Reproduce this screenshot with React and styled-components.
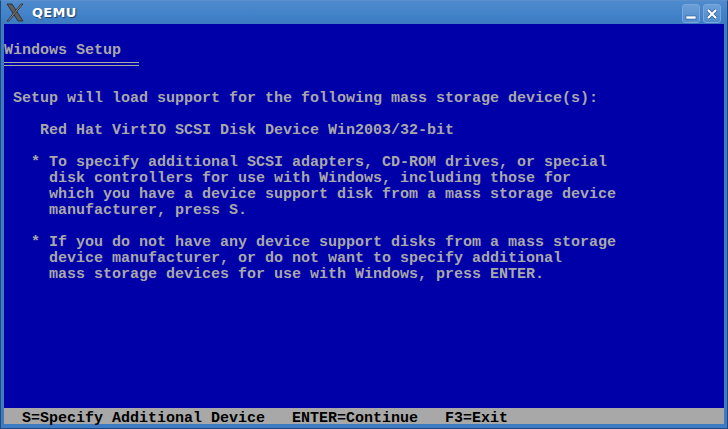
import React from "react";
import styled, { createGlobalStyle } from "styled-components";

const GlobalStyle = createGlobalStyle`
  html, body {
    margin: 0;
    padding: 0;
    background: #1c3f6e;
  }
`;

const Window = styled.div`
  width: 728px;
  height: 429px;
  display: flex;
  flex-direction: column;
  background: #3d7bc3;
  box-sizing: border-box;
  border: 1px solid #23497c;
  border-top-color: #5b8fcc;
`;

const TitleBar = styled.div`
  height: 23px;
  display: flex;
  align-items: center;
  padding: 0 6px 0 5px;
  background: linear-gradient(#4f8bcd, #4282c8 60%, #3c7bc2);
  font-family: "DejaVu Sans", "Liberation Sans", sans-serif;
`;

const Title = styled.span`
  margin-left: 8px;
  color: #fff;
  font-weight: bold;
  font-size: 13px;
  letter-spacing: 0.3px;
  text-shadow: 1px 1px 1px #1d3f70;
  flex: 1;
`;

const Buttons = styled.div`
  display: flex;
  gap: 3px;
  padding-top: 2px;
`;

const TitleButton = styled.div`
  width: 16px;
  height: 17px;
  border-radius: 3px;
  border: 1px solid #7aa6da;
  background: linear-gradient(#6b9fd8, #4f8bcd);
  display: flex;
  align-items: center;
  justify-content: center;
`;

const Frame = styled.div`
  flex: 1;
  display: flex;
  padding: 0 3px 4px 3px;
`;

const Screen = styled.div`
  width: 720px;
  height: 400px;
  background: #0000a8;
  display: flex;
  flex-direction: column;
  font-family: "Liberation Mono", "DejaVu Sans Mono", monospace;
  font-size: 15px;
  font-weight: bold;
  color: #a8a8a8;
`;

const Row = styled.div`
  height: 16px;
  line-height: 21px;
  white-space: pre;
  background: ${(p) => (p.$bar ? "#a8a8a8" : "transparent")};
  color: ${(p) => (p.$bar ? "#000" : "#a8a8a8")};
`;

const Spacer = styled.div`
  flex: 1;
`;

const RuleRow = styled.div`
  height: 16px;
`;

const Rule = styled.div`
  width: 135px;
  height: 4px;
  margin-top: 6px;
  border-top: 1px solid #a8a8a8;
  border-bottom: 1px solid #a8a8a8;
  box-sizing: border-box;
`;

const lines = [
  "",
  "Windows Setup",
  null,
  "",
  " Setup will load support for the following mass storage device(s):",
  "",
  "    Red Hat VirtIO SCSI Disk Device Win2003/32-bit",
  "",
  "   * To specify additional SCSI adapters, CD-ROM drives, or special",
  "     disk controllers for use with Windows, including those for",
  "     which you have a device support disk from a mass storage device",
  "     manufacturer, press S.",
  "",
  "   * If you do not have any device support disks from a mass storage",
  "     device manufacturer, or do not want to specify additional",
  "     mass storage devices for use with Windows, press ENTER.",
];

const XLogo = () => (
  <svg width="18" height="19" viewBox="0 0 18 19">
    <polygon points="1,1 6,1 17,18 12,18" fill="#5e5e5e" stroke="#262626" strokeWidth="0.8" />
    <polygon points="15,1 17,1 3,18 1,18" fill="#8c8c8c" stroke="#262626" strokeWidth="0.8" />
  </svg>
);

const App = () => (
  <>
    <GlobalStyle />
    <Window>
      <TitleBar>
        <XLogo />
        <Title>QEMU</Title>
        <Buttons>
          <TitleButton>
            <svg width="12" height="12" viewBox="0 0 12 12">
              <rect x="1" y="8" width="10" height="3" fill="#fff" stroke="#2c5a94" strokeWidth="0.6" />
            </svg>
          </TitleButton>
          <TitleButton>
            <svg width="12" height="12" viewBox="0 0 12 12">
              <path d="M2 2 L10 10 M10 2 L2 10" stroke="#2c5a94" strokeWidth="3.6" />
              <path d="M2 2 L10 10 M10 2 L2 10" stroke="#fff" strokeWidth="2.2" />
            </svg>
          </TitleButton>
        </Buttons>
      </TitleBar>
      <Frame>
        <Screen>
          {lines.map((l, i) =>
            l === null ? (
              <RuleRow key={i}>
                <Rule />
              </RuleRow>
            ) : (
              <Row key={i}>{l}</Row>
            )
          )}
          <Spacer />
          <Row $bar>{"  S=Specify Additional Device   ENTER=Continue   F3=Exit"}</Row>
        </Screen>
      </Frame>
    </Window>
  </>
);

export default App;
